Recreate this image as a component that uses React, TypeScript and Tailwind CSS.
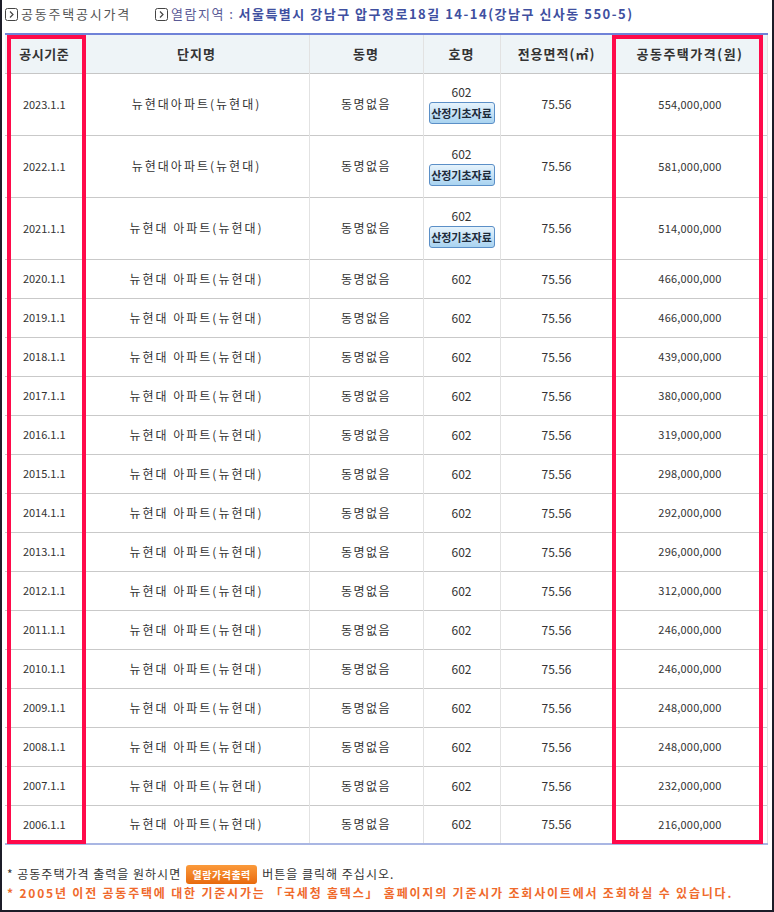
import React from "react"

interface Row {
    year: string
    name: string
    price: string
    button?: boolean
}

const rows: Row[] = [
    { year: "2023.1.1", name: "뉴현대아파트(뉴현대)", price: "554,000,000", button: true },
    { year: "2022.1.1", name: "뉴현대아파트(뉴현대)", price: "581,000,000", button: true },
    { year: "2021.1.1", name: "뉴현대 아파트(뉴현대)", price: "514,000,000", button: true },
    { year: "2020.1.1", name: "뉴현대 아파트(뉴현대)", price: "466,000,000" },
    { year: "2019.1.1", name: "뉴현대 아파트(뉴현대)", price: "466,000,000" },
    { year: "2018.1.1", name: "뉴현대 아파트(뉴현대)", price: "439,000,000" },
    { year: "2017.1.1", name: "뉴현대 아파트(뉴현대)", price: "380,000,000" },
    { year: "2016.1.1", name: "뉴현대 아파트(뉴현대)", price: "319,000,000" },
    { year: "2015.1.1", name: "뉴현대 아파트(뉴현대)", price: "298,000,000" },
    { year: "2014.1.1", name: "뉴현대 아파트(뉴현대)", price: "292,000,000" },
    { year: "2013.1.1", name: "뉴현대 아파트(뉴현대)", price: "296,000,000" },
    { year: "2012.1.1", name: "뉴현대 아파트(뉴현대)", price: "312,000,000" },
    { year: "2011.1.1", name: "뉴현대 아파트(뉴현대)", price: "246,000,000" },
    { year: "2010.1.1", name: "뉴현대 아파트(뉴현대)", price: "246,000,000" },
    { year: "2009.1.1", name: "뉴현대 아파트(뉴현대)", price: "248,000,000" },
    { year: "2008.1.1", name: "뉴현대 아파트(뉴현대)", price: "248,000,000" },
    { year: "2007.1.1", name: "뉴현대 아파트(뉴현대)", price: "232,000,000" },
    { year: "2006.1.1", name: "뉴현대 아파트(뉴현대)", price: "216,000,000" },
]

const ArrowBox = () => (
    <svg width="13" height="13" viewBox="0 0 13 13" className="inline-block mr-[3px] -mt-[2px]">
        <rect x="0.5" y="0.5" width="12" height="12" rx="2" fill="white" stroke="#444" />
        <path d="M5 3.5 L8 6.5 L5 9.5" fill="none" stroke="#444" strokeWidth="1.2" />
    </svg>
)

const cell = "border-r border-[#e2e2e2] text-center align-middle"

const App = () => {
    return (
        <div className="w-[774px] h-[912px] bg-white border-l-2 border-r-2 border-b-2 border-[#1c1c28] text-[#333] font-['Noto_Sans_CJK_KR','Liberation_Sans',sans-serif] overflow-hidden">
            <div className="h-[33px] pl-[3px] pt-[4px] text-[13px] tracking-[1.5px] flex items-start whitespace-nowrap">
                <span className="text-[#555] tracking-[1.8px]"><ArrowBox />공동주택공시가격</span>
                <span className="ml-[24px] text-[#5a5a96]"><ArrowBox />열람지역 : </span>
                <span className="text-[#4050a0] font-semibold tracking-[1.5px] ml-[4px]">서울특별시 강남구 압구정로18길 14-14(강남구 신사동 550-5)</span>
            </div>

            <div className="relative ml-[3px] w-[762px]">
                <table className="w-[762px] border-collapse table-fixed text-[12px] border-t-2 border-t-[#6f82d8] border-b-2 border-b-[#a9b6e3]">
                    <colgroup>
                        <col className="w-[79px]" />
                        <col className="w-[225px]" />
                        <col className="w-[114px]" />
                        <col className="w-[77px]" />
                        <col className="w-[113px]" />
                        <col className="w-[154px]" />
                    </colgroup>
                    <thead>
                        <tr className="h-[39px] bg-[#eef4f7] font-bold text-[13px] text-[#333] tracking-[1px] border-b border-[#c6c6c6]">
                            <th className={cell + " tracking-[0.5px]"}>공시기준</th>
                            <th className={cell}>단지명</th>
                            <th className={cell}>동명</th>
                            <th className={cell}>호명</th>
                            <th className={cell}>전용면적(㎡)</th>
                            <th className={cell + " tracking-[1.5px]"}>공동주택가격(원)</th>
                        </tr>
                    </thead>
                    <tbody>
                        {rows.map((row) => (
                            <tr key={row.year} className={(row.button ? "h-[62px]" : "h-[39px]") + " border-b border-[#c9c9c9] last:border-b-0"}>
                                <td className={cell + " text-[11px]"}>{row.year}</td>
                                <td className={cell + " tracking-[2px]"}>{row.name}</td>
                                <td className={cell + " tracking-[1.5px]"}>동명없음</td>
                                <td className={cell}>
                                    {row.button ? (
                                        <div className="flex flex-col items-center">
                                            <span className="leading-[16px]">602</span>
                                            <span className="mt-[2px] w-[66px] h-[22px] rounded-[3px] border border-[#5b8fc7] bg-gradient-to-b from-[#e6f3fc] to-[#a9d3f0] text-[11px] font-bold text-[#1c2a3a] leading-[20px]">산정기초자료</span>
                                        </div>
                                    ) : "602"}
                                </td>
                                <td className={cell}>75.56</td>
                                <td className={cell + " text-[11px] tracking-[0.2px]"}>{row.price}</td>
                            </tr>
                        ))}
                    </tbody>
                </table>

                <div className="absolute left-[2px] top-[2px] w-[79px] h-[809px] border-4 border-[#ff0a4a] pointer-events-none" />
                <div className="absolute left-[607px] top-[2px] w-[151px] h-[809px] border-4 border-[#ff0a4a] pointer-events-none" />
            </div>

            <div className="mt-[19px] pl-[5px] text-[12px] tracking-[1px] whitespace-nowrap">
                <div className="flex items-center h-[20px]">
                    <span>* 공동주택가격 출력을 원하시면</span>
                    <span className="mx-[5px] w-[71px] text-center h-[19px] leading-[19px] rounded-[3px] bg-gradient-to-b from-[#fb9a3a] to-[#e86a0a] text-white text-[10px] font-bold tracking-[0.5px]">열람가격출력</span>
                    <span>버튼을 클릭해 주십시오.</span>
                </div>
                <div className="text-[#ef6a2c] font-bold text-[12px] tracking-[1.8px] leading-[18px]">
                    * 2005년 이전 공동주택에 대한 기준시가는 「국세청 홈텍스」 홈페이지의 기준시가 조회사이트에서 조회하실 수 있습니다.
                </div>
            </div>
        </div>
    )
}

export default App
